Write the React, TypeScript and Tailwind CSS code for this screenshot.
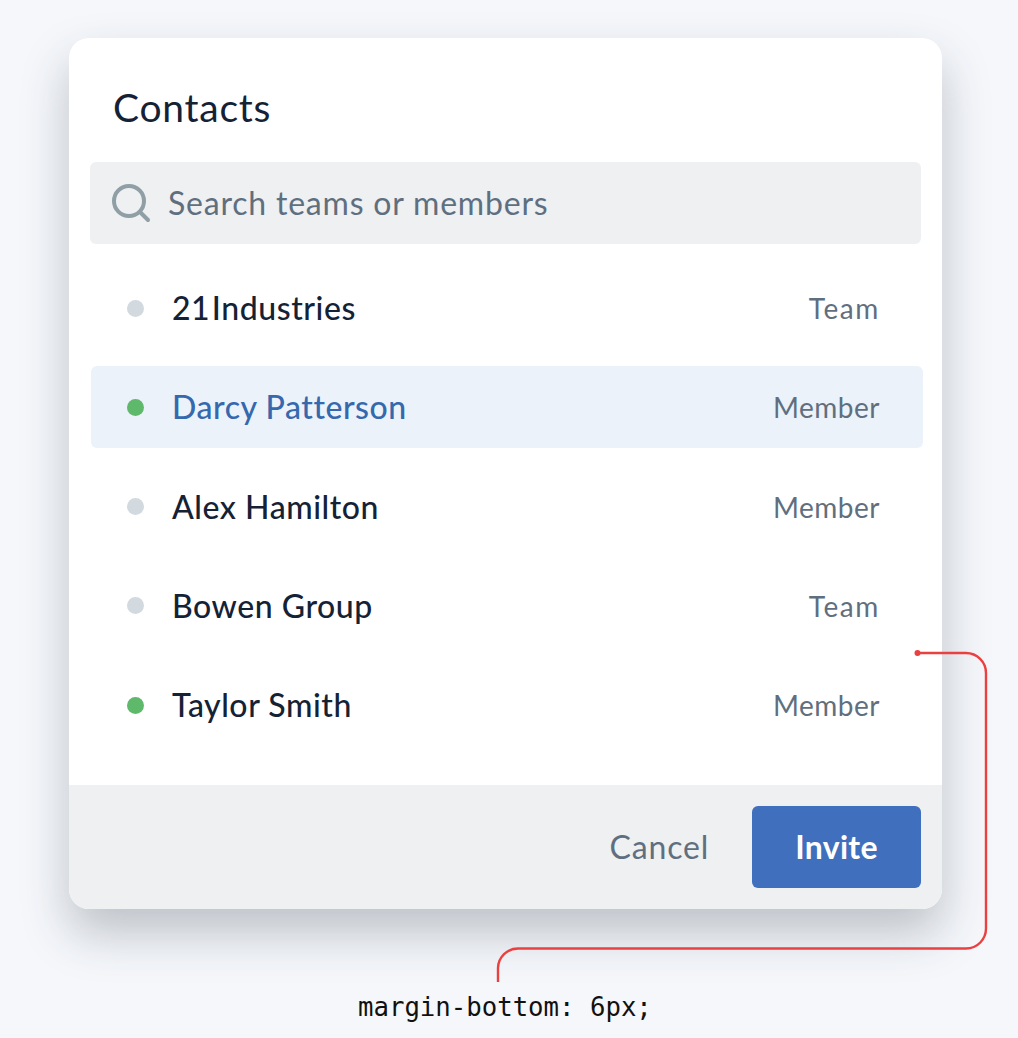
const rows = [
  { name: "21 Industries", kind: "Team", on: false, active: false },
  { name: "Darcy Patterson", kind: "Member", on: true, active: true },
  { name: "Alex Hamilton", kind: "Member", on: false, active: false },
  { name: "Bowen Group", kind: "Team", on: false, active: false },
  { name: "Taylor Smith", kind: "Member", on: true, active: false },
];

export default function App() {
  return (
    <div className="relative h-[1038px] w-[1018px] overflow-hidden bg-[#f5f7fb] pl-[69px] pt-[38px] font-['Lato','Liberation_Sans',sans-serif]">
      <div className="flex h-[871px] w-[873px] flex-col overflow-hidden rounded-[20px] bg-white shadow-[0_24px_48px_rgba(40,50,60,0.27)]">
        <div className="flex-1 px-[21px]">
          <h1 className="mb-[30px] mt-[44px] h-[50px] pl-[23px] text-[39px] leading-[50px] tracking-[0.75px] text-[#152235]">Contacts</h1>
          <div className="flex h-[82px] items-center rounded-[6px] bg-[#eef0f2] pl-[21px]">
            <svg width="40" height="40" viewBox="0 0 40 40" fill="none" stroke="#8f9fa5" strokeWidth="4" strokeLinecap="round">
              <circle cx="18" cy="18" r="15" />
              <path d="M29 29 L37 37" />
            </svg>
            <span className="mb-[1px] ml-[17px] text-[32px] leading-none tracking-[0.8px] text-[#5f6f80]">Search teams or members</span>
          </div>
          <ul className="mt-[23px]">
            {rows.map((r) => (
              <li
                key={r.name}
                className={`ml-[1px] mr-[-2px] mb-[17.25px] flex h-[82px] items-center rounded-[6px] pl-[36px] pr-[43px] ${r.active ? "bg-[#ebf2fa]" : ""}`}
              >
                <span className={`h-[17px] w-[17px] rounded-full ${r.on ? "bg-[#5fb96b]" : "bg-[#d2d9df]"}`} />
                <span className={`ml-[28px] flex-1 text-[32px] font-medium leading-none tracking-[0.55px] ${r.active ? "text-[#3568ad]" : "text-[#152235]"} ${r.name === "21 Industries" ? "[word-spacing:-7px]" : ""}`}>{r.name}</span>
                <span className={`text-[28px] leading-none text-[#5f6f80] ${r.kind === "Team" ? "tracking-[1.6px]" : "tracking-[0.5px]"}`}>{r.kind}</span>
              </li>
            ))}
          </ul>
        </div>
        <div className="flex h-[124px] items-center justify-end bg-[#eef0f2] pr-[21px]">
          <span className="mr-[43px] text-[32px] leading-none tracking-[0.8px] text-[#5f6f80]">Cancel</span>
          <button className="flex h-[82px] w-[169px] items-center justify-center rounded-[6px] bg-[#3f6fbd] text-[32px] font-bold leading-none tracking-[0.3px] text-white">Invite</button>
        </div>
      </div>
      <svg className="absolute left-0 top-0" width="1018" height="1038" fill="none">
        <circle cx="917.5" cy="653" r="3" fill="#ea4040" />
        <path d="M917 653 H966 A20 20 0 0 1 986 673 V928 A20 20 0 0 1 966 948.5 H518 A20 20 0 0 0 498 968 V982" stroke="#ea4040" strokeWidth="2.4" />
      </svg>
      <div className="absolute left-[358px] top-[992px] font-['DejaVu_Sans_Mono',monospace] text-[25.7px] leading-[30px] text-[#111]">margin-bottom: 6px;</div>
    </div>
  );
}
